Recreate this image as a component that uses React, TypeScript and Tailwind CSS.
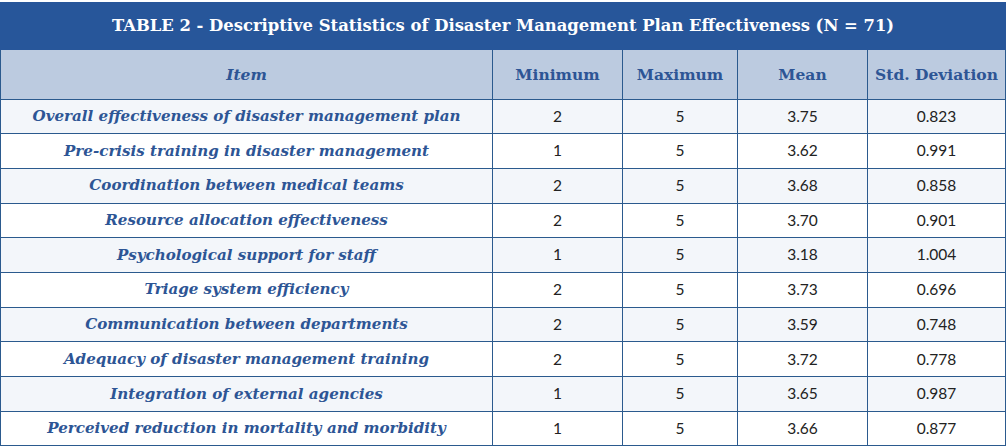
const rows = [
  ['Overall effectiveness of disaster management plan', '2', '5', '3.75', '0.823'],
  ['Pre-crisis training in disaster management', '1', '5', '3.62', '0.991'],
  ['Coordination between medical teams', '2', '5', '3.68', '0.858'],
  ['Resource allocation effectiveness', '2', '5', '3.70', '0.901'],
  ['Psychological support for staff', '1', '5', '3.18', '1.004'],
  ['Triage system efficiency', '2', '5', '3.73', '0.696'],
  ['Communication between departments', '2', '5', '3.59', '0.748'],
  ['Adequacy of disaster management training', '2', '5', '3.72', '0.778'],
  ['Integration of external agencies', '1', '5', '3.65', '0.987'],
  ['Perceived reduction in mortality and morbidity', '1', '5', '3.66', '0.877'],
]

export default function App() {
  return (
    <div className="w-[1006px] bg-white pt-[2px]">
      <div className="flex h-[48px] items-center justify-center bg-[#27569a] font-['DejaVu_Serif',serif] text-[16.4px] font-bold text-white">
        TABLE 2 - Descriptive Statistics of Disaster Management Plan Effectiveness (N = 71)
      </div>
      <table className="w-full table-fixed border-collapse">
        <colgroup>
          <col className="w-[492px]" />
          <col className="w-[130px]" />
          <col className="w-[115px]" />
          <col className="w-[130px]" />
          <col />
        </colgroup>
        <thead>
          <tr className="h-[49px] bg-[#bccbe0] font-['DejaVu_Serif',serif] text-[15.5px] font-bold text-[#2d5595]">
            <th className="border border-t-0 border-[#2b5a8e] italic">Item</th>
            <th className="border border-t-0 border-[#2b5a8e]">Minimum</th>
            <th className="border border-t-0 border-[#2b5a8e]">Maximum</th>
            <th className="border border-t-0 border-[#2b5a8e]">Mean</th>
            <th className="border border-t-0 border-[#2b5a8e]">Std. Deviation</th>
          </tr>
        </thead>
        <tbody>
          {rows.map((r, i) => (
            <tr key={r[0]} className={i % 2 === 0 ? 'h-[34.7px] bg-[#f3f6fa]' : 'h-[34.7px] bg-white'}>
              <td className="border border-[#2b5a8e] p-0 text-center font-['DejaVu_Serif',serif] text-[15.1px] font-bold italic text-[#2d5595]">
                {r[0]}
              </td>
              {r.slice(1).map((v, j) => (
                <td key={j} className="border border-[#2b5a8e] p-0 text-center font-['Lato',sans-serif] text-[15.5px] text-[#222]">
                  {v}
                </td>
              ))}
            </tr>
          ))}
        </tbody>
      </table>
    </div>
  )
}
